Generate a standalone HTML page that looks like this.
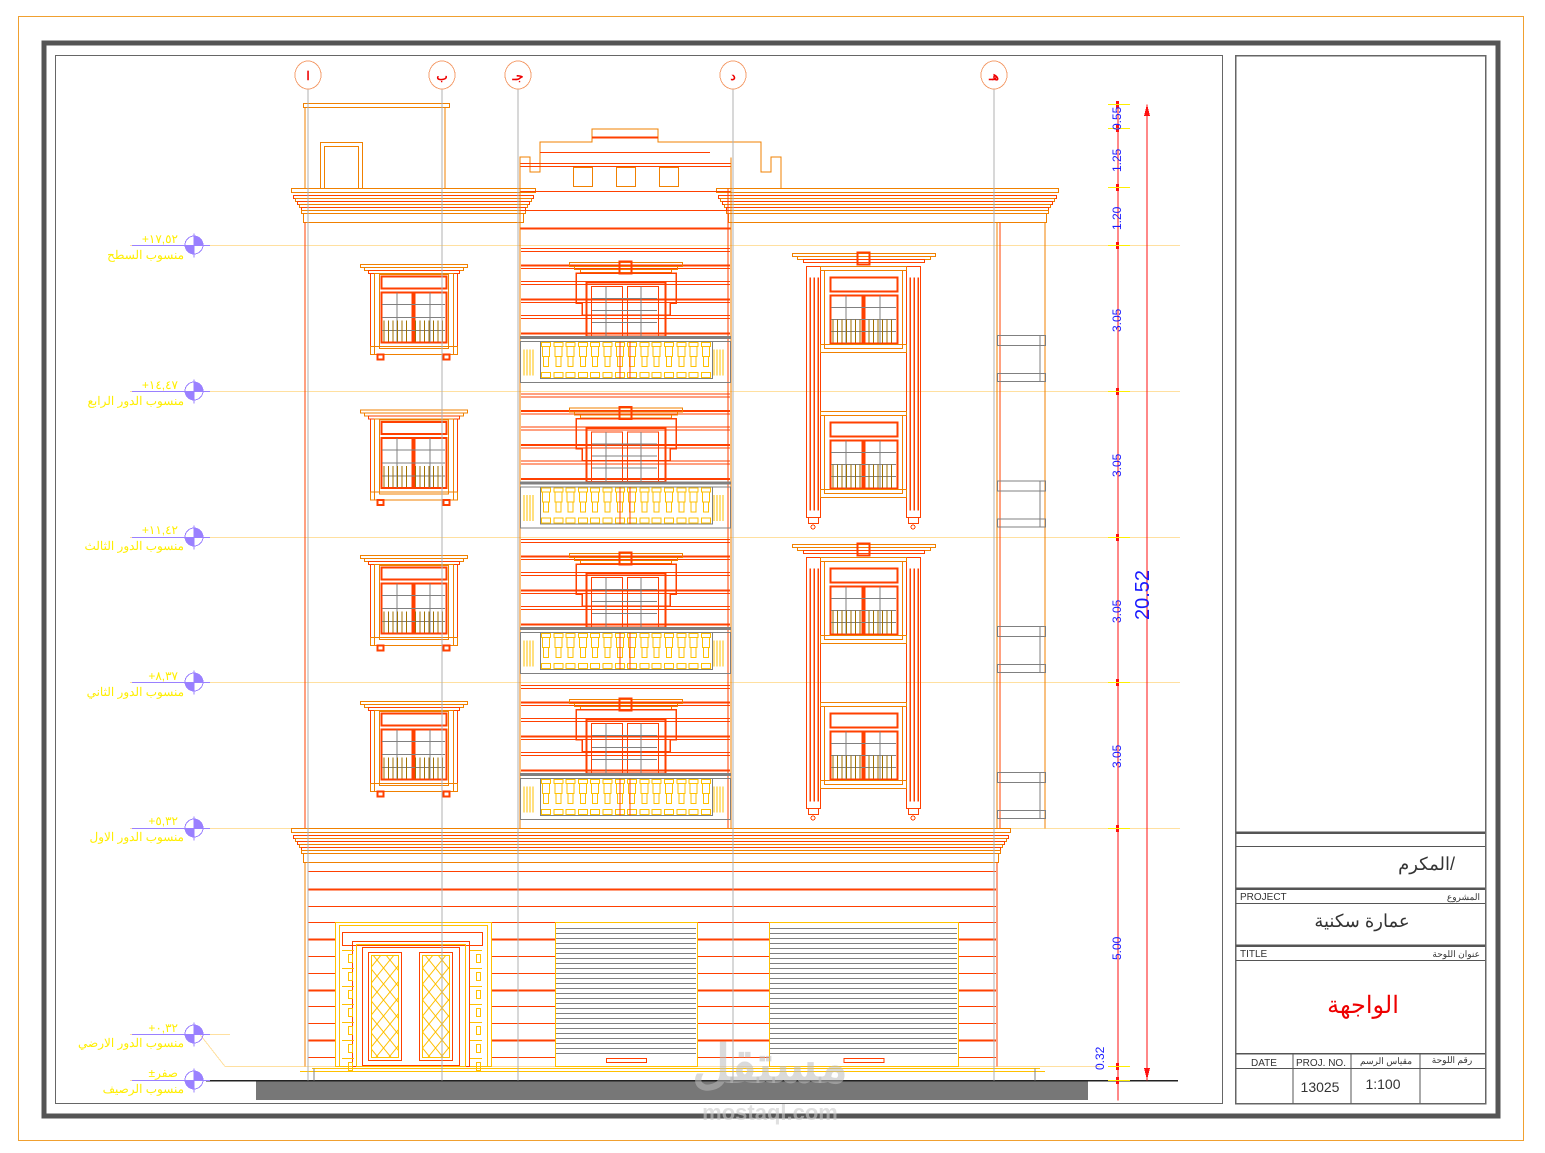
<!DOCTYPE html>
<html><head><meta charset="utf-8">
<style>
html,body{margin:0;padding:0;background:#fff;}
svg{display:block;}
text{font-family:"Liberation Sans","Noto Sans CJK SC",sans-serif;}
</style></head>
<body>
<svg id="s" width="1545" height="1153" viewBox="0 0 1545 1153" xmlns="http://www.w3.org/2000/svg" shape-rendering="crispEdges">
<defs>
<pattern id="lat" x="0" y="0" width="13" height="16" patternUnits="userSpaceOnUse">
<path d="M0 0L13 16M13 0L0 16" stroke="#ffc000" stroke-width="1" fill="none" shape-rendering="auto"/>
</pattern>
</defs>
<rect x="18.5" y="16.5" width="1505" height="1124" fill="none" stroke="#f0a030" stroke-width="1"/>
<rect x="44" y="43" width="1454" height="1073" fill="none" stroke="#555" stroke-width="5"/>
<rect x="55.5" y="55.5" width="1167" height="1048" fill="none" stroke="#666" stroke-width="1"/>
<rect x="1235.5" y="55.5" width="250" height="1048" fill="none" stroke="#666" stroke-width="1.5"/>
<g id="g"></g>
<g fill="none" stroke="#f4a070" stroke-width="1">
<ellipse cx="308" cy="75" rx="13" ry="14"/><ellipse cx="442" cy="75" rx="13" ry="14"/><ellipse cx="518" cy="75" rx="13" ry="14"/><ellipse cx="733" cy="75" rx="13" ry="14"/><ellipse cx="994" cy="75" rx="13" ry="14"/>
</g>
<g fill="#e00" font-size="12" font-weight="bold" text-anchor="middle">
<text x="308" y="80">ا</text><text x="442" y="80">ب</text><text x="518" y="80">جـ</text><text x="733" y="80">د</text><text x="994" y="80">هـ</text>
</g>
<g fill="#ffee00" font-size="12" text-anchor="end">
<text x="178" y="243">+١٧,٥٢</text><text x="184" y="259">منسوب السطح</text>
<text x="178" y="389">+١٤,٤٧</text><text x="184" y="405">منسوب الدور الرابع</text>
<text x="178" y="534">+١١,٤٢</text><text x="184" y="550">منسوب الدور الثالث</text>
<text x="178" y="680">+٨,٣٧</text><text x="184" y="696">منسوب الدور الثاني</text>
<text x="178" y="825">+٥,٣٢</text><text x="184" y="841">منسوب الدور الاول</text>
<text x="178" y="1032">+٠,٣٢</text><text x="184" y="1047">منسوب الدور الارضي</text>
<text x="178" y="1077">±صفر</text><text x="184" y="1093">منسوب الرصيف</text>
</g>
<g fill="#1a1aff" font-size="12">
<text transform="translate(1121,130) rotate(-90)">0.55</text>
<text transform="translate(1121,172) rotate(-90)">1.25</text>
<text transform="translate(1121,230) rotate(-90)">1.20</text>
<text transform="translate(1121,332) rotate(-90)">3.05</text>
<text transform="translate(1121,477) rotate(-90)">3.05</text>
<text transform="translate(1121,623) rotate(-90)">3.05</text>
<text transform="translate(1121,768) rotate(-90)">3.05</text>
<text transform="translate(1121,960) rotate(-90)">5.00</text>
<text transform="translate(1104,1070) rotate(-90)">0.32</text>
<text transform="translate(1149,620) rotate(-90)" font-size="20">20.52</text>
</g>
<g fill="#333">
<text x="1455" y="870" font-size="18" text-anchor="end">المكرم/</text>
<text x="1240" y="900" font-size="10">PROJECT</text>
<text x="1480" y="900" font-size="9" text-anchor="end">المشروع</text>
<text x="1362" y="927" font-size="18" text-anchor="middle">عمارة سكنية</text>
<text x="1240" y="957" font-size="10">TITLE</text>
<text x="1480" y="957" font-size="9" text-anchor="end">عنوان اللوحة</text>
<text x="1363" y="1013" font-size="24" fill="#e00" text-anchor="middle">الواجهة</text>
<text x="1264" y="1066" font-size="10" text-anchor="middle">DATE</text>
<text x="1321" y="1066" font-size="10" text-anchor="middle">PROJ. NO.</text>
<text x="1386" y="1064" font-size="9" text-anchor="middle">مقياس الرسم</text>
<text x="1452" y="1063" font-size="9" text-anchor="middle">رقم اللوحة</text>
<text x="1320" y="1092" font-size="14" text-anchor="middle">13025</text>
<text x="1383" y="1089" font-size="14" text-anchor="middle">1:100</text>
</g>
<text x="770" y="1082" font-size="52" font-weight="bold" fill="#bbb" fill-opacity="0.55" text-anchor="middle">مستقل</text>
<text x="770" y="1120" font-size="22" font-weight="bold" fill="#ccc" fill-opacity="0.6" text-anchor="middle">mostaql.com</text>
</svg>
<script>
var g=document.getElementById('g'),NS='http://www.w3.org/2000/svg';
function el(t,a){var e=document.createElementNS(NS,t);for(var k in a)e.setAttribute(k,a[k]);g.appendChild(e);return e;}
function R(x,y,w,h,c,sw,f){el('rect',{x:x+.5,y:y+.5,width:w,height:h,fill:f||'none',stroke:c,'stroke-width':sw||1});}
function L(x1,y1,x2,y2,c,sw){el('line',{x1:x1,y1:y1+.5,x2:x2,y2:y2+.5,stroke:c,'stroke-width':sw||1});}
var O='#f08000',RD='#ff4000',Y='#ffc000',GR='#808080',LV='#ffe0a0',GL='#b0b0b0',BR='#a07000';
[[832,2.5],[846,1],[888,2.5],[903,1],[945,2.5],[960,1],[1053,1.5],[1068,1]].forEach(function(a){L(1236,a[0],1485,a[0],'#555',a[1]);});
[1293,1351,1420].forEach(function(x){L(x,1053,x,1103,'#555',1);});
R(256,1080,831,19,'#777',1,'#777');
L(206,1080,1178,1080,'#222',1.5);
[245,391,537,682,828].forEach(function(y){L(130,y,1180,y,LV,1);});
L(130,1034,230,1034,LV,1);L(130,1080,206,1080,LV,1);
L(200,1034,225,1066,LV,1);L(225,1066,1100,1066,LV,1);
[245,391,537,682,828,1034,1080].forEach(function(y){
 el('circle',{cx:194,cy:y,r:9,fill:'none',stroke:'#9a80ff'});
 el('path',{d:'M194 '+y+'V'+(y-9)+'A9 9 0 0 1 203 '+y+'Z',fill:'#9a80ff'});
 el('path',{d:'M194 '+y+'V'+(y+9)+'A9 9 0 0 1 185 '+y+'Z',fill:'#9a80ff'});
 L(132,y,210,y,'#9a80ff',1);L(194,y-12,194,y+12,'#9a80ff',1);
});
L(1118,104,1118,1100,'#ff1010',1);L(1147,104,1147,1080,'#ff1010',1);
[104,128,187,245,391,537,682,828,1066,1080].forEach(function(y){R(1116,y-3,2,6,'#ff1010',1,'#ff1010');L(1108,y,1130,y,'#ffee00',1);});
el('path',{d:'M1147 104 l-3 12 h6z',fill:'#ff1010'});el('path',{d:'M1147 1080 l-3 -12 h6z',fill:'#ff1010'});
R(303,103,146,4,O);L(305,107,305,188,O);L(445,107,445,188,O);
R(320,142,42,46,O);R(324,146,34,42,O);
function cornice(x1,x2,y){R(x1,y,x2-x1,4,O);
 for(var i=1;i<7;i++){var d=Math.min(i*2,10);R(x1+d,y+4+i*3,x2-x1-2*d,3,i%2?RD:O);}
 R(x1+12,y+25,x2-x1-24,9,O);}
cornice(291,535,188);cornice(716,1058,188);
el('path',{d:'M520 188V157h10v15h10V142h52v-13h66v13h103v30h10v-15h10v31',fill:'none',stroke:O});
L(592,137,658,137,RD,2);L(540,152,710,152,RD,1);L(520,163,731,163,RD,1);L(520,166,731,166,RD,1);
[573,616,659].forEach(function(x){R(x,167,19,19,O);});
L(520,191,731,191,RD,1);L(520,210,731,210,RD,1);L(520,228,731,228,RD,2);
L(305,222,305,828,RD);L(308,222,308,828,O);
L(520,157,520,828,O);L(731,157,731,828,O);L(728,188,728,828,RD);
L(997,222,997,828,O);L(1000,222,1000,828,RD);L(1045,222,1045,828,O);
for(var f=0;f<4;f++){var b=245+f*145.6;
 [b+3,b+20,b+36,b+54,b+70,b+88].forEach(function(y,i){L(521,y,730,y,RD,i%2?2:1);L(521,y+3,730,y+3,RD,1);});
 R(569,b+17,113,4,O);R(574,b+21,103,3,O);R(580,b+24,91,3,O);
 R(619,b+16,12,12,RD,2);
 el('path',{d:'M576 '+(b+28)+'v30h6v12h88v-12h6v-30z',fill:'none',stroke:RD,'stroke-width':1.5});
 R(586,b+37,79,54,RD,2);R(591,b+41,31,50,RD,1);R(627,b+41,31,50,RD,1);
 [b+53,b+65,b+77].forEach(function(y){L(592,y,657,y,GR);});L(606,b+41,606,b+91,GR);L(641,b+41,641,b+91,GR);
 R(520,b+91,210,2,GR,1,GR);R(540,b+96,172,37,GR);R(520,b+96,210,41,GR);
 for(var x=541;x<710;x+=12.3){R(x,b+97,9,4,Y);R(x+1,b+101,7,10,Y);R(x+2,b+111,5,10,Y);R(x,b+127,9,5,Y);}
 for(var x=524;x<536;x+=3)L(x,b+104,x,b+130,Y);for(var x=714;x<726;x+=3)L(x,b+104,x,b+130,Y);
 L(620,b+96,620,b+133,RD);L(630,b+96,630,b+133,RD);
 R(997,b+90,48,10,GR);R(997,b+128,48,8,GR);L(1040,b+90,1040,b+136,GR);
}
for(var f=0;f<4;f++){var y=262+f*145.6;
 R(360,y+2,107,3,O);R(364,y+5,99,3,O);R(368,y+8,91,3,RD);
 R(370,y+11,87,81,RD);R(374,y+11,79,81,O);R(379,y+12,69,74,O);
 R(381,y+14,65,12,RD,2);R(381,y+30,31,50,RD,2);R(414,y+30,32,50,RD,2);
 [y+42,y+55,y+68].forEach(function(yy){L(382,yy,445,yy,GR);});L(397,y+30,397,y+80,GR);L(430,y+30,430,y+80,GR);
 for(var x=384;x<445;x+=4.5)if(Math.abs(x-413)>2)L(x,y+58,x,y+79,BR);
 R(370,y+84,87,8,O);R(377,y+92,6,5,RD,2);R(443,y+92,6,5,RD,2);
}
[252,543].forEach(function(b){
 R(792,b+1,143,3,O);R(797,b+4,133,3,O);R(803,b+7,121,3,RD);R(857,b,12,12,RD,2);
 R(806,b+14,14,251,RD);R(906,b+14,14,251,RD);
 [810,814,818].forEach(function(x){L(x,b+25,x,b+258,RD,1.5);});[910,914,918].forEach(function(x){L(x,b+25,x,b+258,RD,1.5);});
 R(808,b+265,10,6,RD);R(908,b+265,10,6,RD);el('circle',{cx:813,cy:b+275,r:2,fill:'none',stroke:RD});el('circle',{cx:913,cy:b+275,r:2,fill:'none',stroke:RD});
 [0,145].forEach(function(o){var y=b+o;
  R(820,y+14,86,4,O);R(824,y+18,78,78,O);
  R(830,y+25,67,14,RD,2);R(830,y+43,32,48,RD,2);R(864,y+43,33,48,RD,2);
  [y+55,y+67,y+79].forEach(function(yy){L(831,yy,896,yy,GR);});L(846,y+43,846,y+91,GR);L(880,y+43,880,y+91,GR);
  for(var x=833;x<896;x+=4.5)if(Math.abs(x-863)>2)L(x,y+67,x,y+90,BR);
  R(820,y+92,86,8,O);
 });
});
cornice(291,1010,828);
L(305,862,305,1066,O);L(308,862,308,1066,RD);L(997,862,997,1066,RD);
[871,889,906,922,939,956,973,990,1006,1023,1040,1057].forEach(function(y,i){
 var w=(i%3==1)?2:1;
 if(y<922){L(308,y,996,y,RD,w);}else{L(308,y,335,y,RD,w);L(492,y,555,y,RD,w);L(697,y,769,y,RD,w);L(958,y,996,y,RD,w);}
});
R(335,922,156,144,Y);R(339,925,148,141,Y);R(342,932,140,13,RD);
R(352,941,117,125,RD);R(356,944,109,122,Y);R(362,947,97,118,RD);
R(368,952,33,108,RD);R(419,952,33,108,RD);
el('rect',{x:371.5,y:955.5,width:27,height:102,fill:'url(#lat)',stroke:Y});
el('rect',{x:422.5,y:955.5,width:27,height:102,fill:'url(#lat)',stroke:Y});
[[342,354],[470,482]].forEach(function(a){for(var y=950;y<1060;y+=18){L(a[0],y,a[1],y,Y);R(a[0]+6,y+4,4,8,Y);}});
[[555,697],[769,958]].forEach(function(a){R(a[0],922,a[1]-a[0],144,Y);
 for(var y=928;y<1054;y+=5)L(a[0]+1,y,a[1]-1,y,GR,1);
 var m=(a[0]+a[1])/2;R(m-20,1058,40,4,RD);});
L(312,1068,1040,1068,Y);L(300,1071,1045,1071,Y);L(314,1068,314,1080,GR);L(1035,1068,1035,1080,GR);
[308,442,518,733,994].forEach(function(x){L(x,89,x,1080,GL);});
</script>
</body></html>
